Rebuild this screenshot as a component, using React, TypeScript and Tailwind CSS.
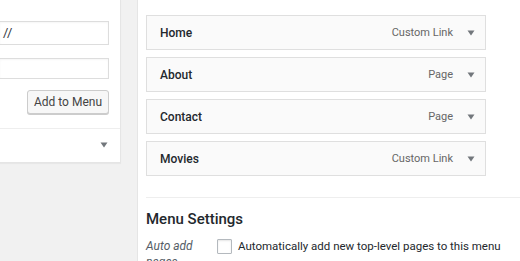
import React from "react";

const items = [
  { title: "Home", type: "Custom Link" },
  { title: "About", type: "Page" },
  { title: "Contact", type: "Page" },
  { title: "Movies", type: "Custom Link" },
];

function Arrow() {
  return (
    <svg width="8" height="6" viewBox="0 0 8 6" className="block">
      <path d="M0.5 0.5 L7.5 0.5 L4 5.5 Z" fill="#72777c" />
    </svg>
  );
}

export default function App() {
  return (
    <div
      className="w-[520px] h-[261px] bg-[#f1f1f1] flex overflow-hidden text-[#23282d]"
      style={{ fontFamily: "Roboto, Inter, 'Noto Sans', sans-serif" }}
    >
      <div className="w-[121px] shrink-0 self-start">
        <div className="bg-white border-r border-b border-[#e5e5e5] shadow-[0_1px_1px_rgba(0,0,0,0.04)] h-[163px] flex flex-col">
          <div className="pt-[21px] pr-[11px] flex flex-col">
            <div className="h-[24px] -ml-px border border-[#dddddd] bg-white flex items-center pl-[3px] text-[13px] text-[#32373c] shadow-[inset_0_1px_2px_rgba(0,0,0,0.04)]">
              //
            </div>
            <div className="mt-[13px] h-[21px] -ml-px border border-[#dddddd] bg-white shadow-[inset_0_1px_2px_rgba(0,0,0,0.04)]" />
            <div className="mt-[11px] flex justify-end">
              <div className="h-[24px] w-[82px] border border-[#cccccc] rounded-[3px] bg-[#f7f7f7] shadow-[0_1px_0_#cccccc] flex items-center justify-center text-[12px] text-[#444444]">
                Add to Menu
              </div>
            </div>
          </div>
          <div className="mt-[14px] border-t border-[#eeeeee] flex-1 flex items-center justify-end pr-[12px] pb-[2px]">
            <Arrow />
          </div>
        </div>
      </div>
      <div className="ml-[16px] flex-1 bg-white border-l border-[#e5e5e5] pl-[8px] flex flex-col">
        <div className="pt-[15px] w-[340px] flex flex-col gap-[7px]">
          {items.map((it) => (
            <div
              key={it.title}
              className="h-[35px] border border-[#dfdfdf] bg-[#fafafa] flex items-center pl-[13px] pr-[10px]"
            >
              <span className="text-[12px] leading-[16px] font-medium text-[#23282d]">{it.title}</span>
              <span className="ml-auto text-[11px] leading-[16px] text-[#666666] pt-[1px]">{it.type}</span>
              <span className="ml-[14px]">
                <Arrow />
              </span>
            </div>
          ))}
        </div>
        <div className="mt-[21px] border-t border-[#eeeeee] -mr-[10px]" />
        <div className="mt-[11px] text-[15px] font-medium text-[#23282d] leading-[20px]">
          Menu Settings
        </div>
        <div className="mt-[9px] flex">
          <div className="w-[71px] italic text-[12px] leading-[16px] text-[#555d66]">
            Auto add pages
          </div>
          <div className="flex items-start">
            <div className="mt-[1px] w-[15px] h-[15px] border border-[#b4b9be] bg-white rounded-[1px] shadow-[inset_0_1px_2px_rgba(0,0,0,0.1)]" />
            <div className="ml-[6px] text-[11.5px] leading-[16px] text-[#23282d] whitespace-nowrap">
              Automatically add new top-level pages to this menu
            </div>
          </div>
        </div>
      </div>
    </div>
  );
}
